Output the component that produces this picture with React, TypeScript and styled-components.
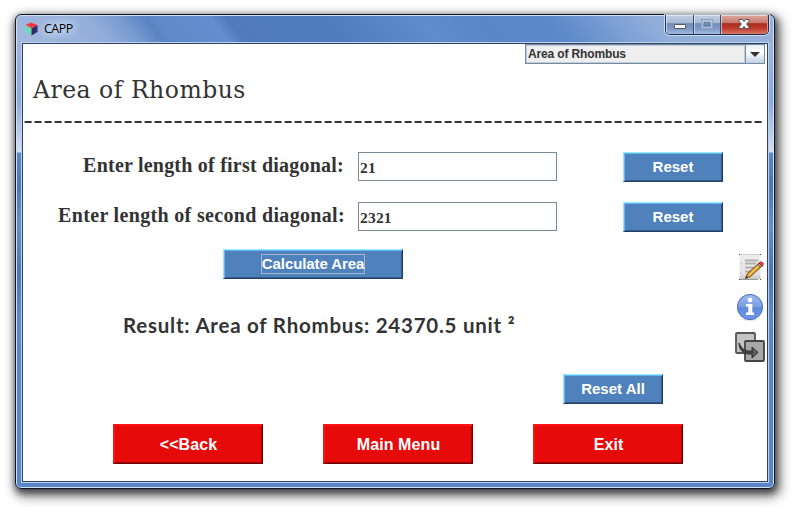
import React from "react";
import styled, { createGlobalStyle, css } from "styled-components";

const GlobalStyle = createGlobalStyle`
  *, *::before, *::after { box-sizing: border-box; }
  html, body { margin: 0; background: #fff; overflow: hidden; }
  button, input { font: inherit; margin: 0; padding: 0; }
`;

const Desktop = styled.main`
  width: 804px;
  height: 507px;
  padding: 14px 29px 18px 15px;
  background: #fff;
  overflow: hidden;
`;

const Window = styled.section`
  width: 760px;
  height: 475px;
  display: flex;
  flex-direction: column;
  border: 1px solid #0d1426;
  border-radius: 6px;
  padding: 0 6px 6px;
  box-shadow: inset 0 0 0 1px #d2e0f4, 1px 3px 7px 1px rgba(0, 0, 0, 0.6), 3px 5px 12px 3px rgba(0, 0, 0, 0.42);
  background:
    linear-gradient(50deg, #a3b9de, #93aedb 70px, #7a9bd0 95px, #5a85c3 114px, #5f8bca 124px, #638dce 164px, #4f7bbd 177px, #4f7cbe 250px, #5f8ccc 325px, #5886c7 370px, #5c89c9 425px, #7c9fd5 470px, #91add9 500px, #98b1dc) 0 0 / 100% 28px no-repeat,
    linear-gradient(180deg, #9db5df 28px, #88a9dc 85px, #d3e0f2 137px, #5c88cb 138px, #4a78ba 170px, #6390d0 210px, #4b78ba 255px, #5b88cb 300px, #5885c8);
`;

const TitleBar = styled.header`
  flex: none;
  height: 28px;
  display: flex;
  align-items: flex-start;
  justify-content: space-between;
`;

const Caption = styled.div`
  display: flex;
  align-items: center;
  height: 28px;
  padding-left: 3px;
  gap: 5px;
  color: #000;
  font: 12.5px/16px "Open Sans", "Noto Sans", sans-serif;
`;

const CaptionText = styled.span`
  padding-left: 1px;
  letter-spacing: -0.55px;
  text-shadow: 0 0 7px #dce8f8, 0 0 9px #dce8f8, 0 0 12px #dce8f8;
`;

const WindowButtons = styled.div`
  display: flex;
  width: 104px;
  height: 20px;
  margin-right: -1px;
  border: 1px solid #1f2f4d;
  border-top: 0;
  border-radius: 0 0 5px 5px;
  box-shadow: 0 0 0 1px rgba(224, 235, 250, 0.75);
  overflow: hidden;
`;

const WindowButton = styled.button<{ $width: number; $close?: boolean }>`
  display: flex;
  flex: none;
  width: ${(p) => p.$width}px;
  height: 19px;
  align-items: center;
  justify-content: center;
  border: 0;
  border-right: 1px solid ${(p) => (p.$close ? "#d99189" : "#30486f")};
  box-shadow: inset 1px 1px 0 rgba(255, 255, 255, 0.55);
  background: ${(p) =>
    p.$close
      ? "linear-gradient(#dda79c, #c8796d 43%, #a92e20 45%, #c0392a 70%, #d77867)"
      : "linear-gradient(#c0cde3, #a8b9d6 43%, #718db8 45%, #7e9bc9 75%, #a4bce0)"};
`;

const Client = styled.div`
  width: 746px;
  height: 439px;
  display: flex;
  flex-direction: column;
  border: 1px solid #2e4261;
  box-shadow: 0 0 0 1px #bfd2ee;
  background: #fff;
  color: #333;
`;

const TopRow = styled.div`
  display: flex;
  justify-content: flex-end;
  height: 20px;
  padding-right: 2px;
`;

const Combo = styled.button`
  display: flex;
  width: 240px;
  height: 20px;
  border: 1px solid #7a8a99;
  background: #eee;
  color: #333;
  text-align: left;
  font: bold 12px/16px "Liberation Sans", Arial, sans-serif;
  letter-spacing: -0.14px;
`;

const ComboValue = styled.span`
  flex: 1;
  height: 18px;
  padding-left: 1px;
  border: 1px solid #b8cfe5;
`;

const ComboArrow = styled.span`
  display: flex;
  width: 19px;
  height: 18px;
  align-items: center;
  justify-content: center;
  border-left: 1px solid #7a8a99;
  background: linear-gradient(#e6eef6, #fff 40%, #bdd2e6);
`;

const Heading = styled.h1`
  height: 57px;
  margin: 0;
  padding: 10px 0 0 10px;
  font: normal 23.5px/32px "DejaVu Serif", serif;
  letter-spacing: 0.5px;
  white-space: nowrap;
`;

const DashedRule = styled.div`
  width: 738px;
  height: 2px;
  margin-left: 1px;
  background: repeating-linear-gradient(90deg, #b5a294 0 1px, #333 1px 7px, #777 7px 8px, transparent 8px 10px);
`;

const Body = styled.div`
  display: flex;
  flex: 1;
`;

const Form = styled.div`
  width: 700px;
  display: flex;
  flex-direction: column;
  padding-top: 29px;
`;

const FieldRow = styled.div`
  display: flex;
  height: 30px;
  margin-bottom: 20px;
`;

const Label = styled.label<{ $gap: number; $tracking: number }>`
  width: 335px;
  padding-right: ${(p) => p.$gap}px;
  text-align: right;
  white-space: nowrap;
  font: bold 20px/26px "Liberation Serif", "Times New Roman", serif;
  letter-spacing: ${(p) => p.$tracking}px;
`;

const Field = styled.input`
  width: 199px;
  height: 29px;
  margin-right: 66px;
  padding: 3px 0 0 1px;
  border: 1px solid #7a8a99;
  outline: 0;
  color: #333;
  font: bold 15.5px/24px "Liberation Serif", "Times New Roman", serif;
  letter-spacing: 0.2px;
`;

const BevelButton = styled.button<{ $width: number; $danger?: boolean }>`
  flex: none;
  width: ${(p) => p.$width}px;
  height: 30px;
  border: 1px solid;
  border-color: #90ecff #233f63 #233f63 #90ecff;
  box-shadow: inset 1px 1px 0 #68b4f8, inset -1px -1px 0 #355a8a;
  background: #4f81bd;
  color: #fff;
  text-align: center;
  font: bold 15px/20px "Liberation Sans", Arial, sans-serif;
  ${(p) =>
    p.$danger &&
    css`
      height: 40px;
      padding: 1px 0 0 1px;
      font-size: 16px;
      letter-spacing: 0.1px;
      background: #e60a0a;
      border-color: #ff1414 #700000 #700000 #ff1414;
      box-shadow: inset 1px 1px 0 #ff0e0e, inset -1px -1px 0 #a20606;
    `}
`;

const FocusText = styled.span`
  display: inline-block;
  height: 20px;
  border: 1px solid #a3b8cc;
  line-height: 18px;
  letter-spacing: -0.1px;
`;

const CalculateRow = styled.div`
  height: 30px;
  margin-top: -3px;
  padding-left: 200px;
`;

const Result = styled.output`
  display: block;
  height: 30px;
  margin: 31px 0 34px;
  padding-left: 100px;
  white-space: nowrap;
  font: bold 20.5px/30px Lato, sans-serif;
  letter-spacing: 0.76px;
`;

const ResetAllRow = styled.div`
  height: 30px;
  padding-left: 540px;
`;

const Navigation = styled.nav`
  display: flex;
  gap: 60px;
  padding: 20px 0 0 90px;
`;

const Tools = styled.aside`
  display: flex;
  width: 44px;
  flex-direction: column;
  align-items: flex-end;
  padding: 129px 2px 0 0;
  gap: 10px;
`;

const Tool = styled.button`
  width: 30px;
  height: 30px;
  border: 0;
  background: transparent;
  svg { display: block; }
`;

const CubeIcon = () => (
  <svg width="13" height="14" viewBox="0 0 13 14">
    <path d="M.5 3 6 .5 12.5 3 6.5 6.5Z" fill="#ff3545" />
    <path d="M.5 3 6.5 6.5V13L.5 10Z" fill="#63dfb4" />
    <path d="M6.5 6.5 12.5 3V10L6.5 13.5Z" fill="#342b66" />
  </svg>
);

const MinimizeIcon = () => (
  <svg width="14" height="19" viewBox="0 0 14 19">
    <rect x="1.5" y="9.5" width="11" height="4" rx=".5" fill="#fff" stroke="#53586b" />
  </svg>
);

const MaximizeIcon = () => (
  <svg width="14" height="19" viewBox="0 0 14 19" fill="none">
    <rect x="2" y="5" width="10" height="8" stroke="#b3c0d6" strokeWidth="2" />
    <rect x="4.5" y="7.5" width="5" height="3" stroke="#657fa9" />
    <rect x="1.5" y="4.5" width="11" height="9" stroke="#8292b2" strokeWidth=".7" />
  </svg>
);

const CloseIcon = () => (
  <svg width="14" height="19" viewBox="0 0 14 19" fill="none">
    <path d="M2 4.5h3.6L7 6.6l1.4-2.1H12v1.8L9.6 9l2.4 2.9v1.6H8.4L7 11.4l-1.4 2.1H2v-1.6L4.4 9 2 6.3Z" fill="#fff" stroke="#54515f" />
  </svg>
);

const NoteIcon = () => (
  <svg width="30" height="30" viewBox="0 0 30 30">
    <defs>
      <linearGradient id="paper" x2="0" y2="1">
        <stop stopColor="#ededed" />
        <stop offset=".75" stopColor="#e5e5e5" />
        <stop offset="1" stopColor="#c8c8c8" />
      </linearGradient>
    </defs>
    <path d="M4.5 2h21v25h-21z" fill="url(#paper)" />
    <path d="M5 2.5h20" stroke="#cfcfcf" />
    <path d="M5 27.5h18" stroke="#999" />
    <path d="M4 2h1v1H4zM25 2h1v1h-1zM4 27h1v1H4zM25 27h1v1h-1z" fill="#444" />
    <path d="M10 8.5h13M10 11.5h11M10 15.5h9M10 19.5h7" stroke="#b0b0b0" strokeWidth="1.8" />
    <path d="M6 11v1M6 20v1" stroke="#bbb" />
    <path d="m10.5 26.5 2-5L24 11l3 3-11.5 10.5Z" fill="#e5a334" stroke="#6c4818" />
    <path d="m14 23 10.5-10" stroke="#ffdb78" />
    <path d="m22.7 12.3 2.8 2.9" stroke="#777" strokeWidth="1.5" />
    <path d="m24 11 2-1.2 2.3 1.5-.8 3Z" fill="#ed4344" stroke="#b82732" />
    <path d="m10.5 26.5 1-2.5 1.5 1.3Z" fill="#292929" />
  </svg>
);

const InfoIcon = () => (
  <svg width="30" height="30" viewBox="0 0 30 30">
    <defs>
      <linearGradient id="info" x2="0" y2="1">
        <stop stopColor="#9bb9f1" />
        <stop offset=".48" stopColor="#7d9fe0" />
        <stop offset=".53" stopColor="#5f89d9" />
        <stop offset="1" stopColor="#7298e9" />
      </linearGradient>
    </defs>
    <ellipse cx="15" cy="27.5" rx="8" ry="1.2" fill="#ddd" />
    <circle cx="15" cy="15" r="12.6" fill="url(#info)" stroke="#4a70bf" />
    <circle cx="15" cy="8" r="2.4" fill="#fff" />
    <path d="M11 12h6.3v8.5H19V23h-8v-2.5h2.3v-6H11Z" fill="#fff" />
  </svg>
);

const TransferIcon = () => (
  <svg width="30" height="30" viewBox="0 0 30 30" strokeLinejoin="round">
    <rect x="1" y="1" width="19" height="20" rx="1" fill="#c4c4c4" stroke="#555" strokeWidth="1.8" />
    <rect x="10" y="9" width="19" height="20" rx="1" fill="#a7a7a7" stroke="#454545" strokeWidth="1.8" />
    <path d="M4 11c2 4 4 7 9 8h4v-4l6 5.5-6 5.5v-4h-4C7 21 4 17 4 11Z" fill="#444" stroke="#333" />
    <path d="m18 18 3 2.5-3 2.5" fill="none" stroke="#888" />
  </svg>
);

export default function App() {
  return (
    <>
      <GlobalStyle />
      <Desktop>
        <Window>
          <TitleBar>
            <Caption><CubeIcon /><CaptionText>CAPP</CaptionText></Caption>
            <WindowButtons>
              <WindowButton $width={28} aria-label="Minimize"><MinimizeIcon /></WindowButton>
              <WindowButton $width={27} aria-label="Maximize"><MaximizeIcon /></WindowButton>
              <WindowButton $width={47} $close aria-label="Close"><CloseIcon /></WindowButton>
            </WindowButtons>
          </TitleBar>
          <Client>
            <TopRow>
              <Combo>
                <ComboValue>Area of Rhombus</ComboValue>
                <ComboArrow>
                  <svg width="10" height="5"><path d="M0 0h10L5 5Z" fill="#333" /></svg>
                </ComboArrow>
              </Combo>
            </TopRow>
            <Heading>Area of Rhombus</Heading>
            <DashedRule />
            <Body>
              <Form>
                <FieldRow>
                  <Label $gap={14} $tracking={0.22} htmlFor="first">Enter length of first diagonal:</Label>
                  <Field id="first" defaultValue="21" />
                  <BevelButton $width={100}>Reset</BevelButton>
                </FieldRow>
                <FieldRow>
                  <Label $gap={13} $tracking={0.33} htmlFor="second">Enter length of second diagonal:</Label>
                  <Field id="second" defaultValue="2321" />
                  <BevelButton $width={100}>Reset</BevelButton>
                </FieldRow>
                <CalculateRow>
                  <BevelButton $width={180}><FocusText>Calculate Area</FocusText></BevelButton>
                </CalculateRow>
                <Result>Result: Area of Rhombus: 24370.5 unit ²</Result>
                <ResetAllRow><BevelButton $width={100}>Reset All</BevelButton></ResetAllRow>
                <Navigation>
                  <BevelButton $width={150} $danger>&lt;&lt;Back</BevelButton>
                  <BevelButton $width={150} $danger>Main Menu</BevelButton>
                  <BevelButton $width={150} $danger>Exit</BevelButton>
                </Navigation>
              </Form>
              <Tools>
                <Tool aria-label="Notes"><NoteIcon /></Tool>
                <Tool aria-label="Information"><InfoIcon /></Tool>
                <Tool aria-label="Transfer"><TransferIcon /></Tool>
              </Tools>
            </Body>
          </Client>
        </Window>
      </Desktop>
    </>
  );
}
